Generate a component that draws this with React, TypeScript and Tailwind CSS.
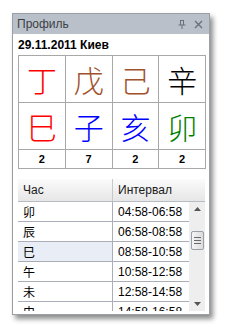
import React from 'react';

const stems = [
  { ch: '丁', color: 'text-[#ff0000]' },
  { ch: '戊', color: 'text-[#a0522d]' },
  { ch: '己', color: 'text-[#a0522d]' },
  { ch: '辛', color: 'text-black' },
];

const branches = [
  { ch: '巳', color: 'text-[#ff0000]' },
  { ch: '子', color: 'text-[#0000ff]' },
  { ch: '亥', color: 'text-[#0000ff]' },
  { ch: '卯', color: 'text-[#008000]' },
];

const counts = ['2', '7', '2', '2'];

const hours = [
  { h: '卯', t: '04:58-06:58' },
  { h: '辰', t: '06:58-08:58' },
  { h: '巳', t: '08:58-10:58', selected: true },
  { h: '午', t: '10:58-12:58' },
  { h: '未', t: '12:58-14:58' },
  { h: '申', t: '14:58-16:58' },
];

const cjk = { fontFamily: '"Noto Sans CJK SC", sans-serif' };

const App: React.FC = () => {
  return (
    <div className="w-[225px] h-[330px] bg-white pl-[12px] pt-[13px] font-['Liberation_Sans',Arial,sans-serif]">
      <div className="w-[198px] h-[302px] border border-[#9a9fa6] bg-white shadow-[3px_4px_5px_rgba(0,0,0,0.45)] flex flex-col overflow-hidden">
        {/* title bar */}
        <div className="h-[20px] bg-[#b9c0c9] flex items-center pl-[4px] pr-[6px] shrink-0">
          <span className="text-[12px] text-[#3c4046] leading-none">Профиль</span>
          <div className="ml-auto flex items-center gap-[8px] text-[#6a7078]">
            <svg width="8" height="9" viewBox="0 0 8 9">
              <path d="M2 0.5h4M2.5 0.5v4.5M5.5 0.5v4.5M0.5 5h7M4 5v4" stroke="currentColor" strokeWidth="1" fill="none" />
            </svg>
            <svg width="9" height="9" viewBox="0 0 9 9">
              <path d="M1 1l7 7M8 1l-7 7" stroke="currentColor" strokeWidth="1.4" fill="none" />
            </svg>
          </div>
        </div>

        <div className="pl-[5px] pr-[3px] flex flex-col">
          <div className="h-[21px] pt-[5px] text-[12px] font-bold text-black leading-none">29.11.2011 Киев</div>

          {/* pillars grid */}
          <div className="grid grid-cols-4 w-[188px] border-l border-t border-[#a8a8a8]">
            {stems.map((s, i) => (
              <div key={'s' + i} className={`h-[47px] border-r border-b border-[#a8a8a8] flex items-center justify-center text-[30px] font-light leading-none ${s.color}`} style={cjk}>
                {s.ch}
              </div>
            ))}
            {branches.map((s, i) => (
              <div key={'b' + i} className={`h-[47px] border-r border-b border-[#a8a8a8] flex items-center justify-center text-[30px] font-light leading-none ${s.color}`} style={cjk}>
                {s.ch}
              </div>
            ))}
            {counts.map((c, i) => (
              <div key={'c' + i} className="h-[19px] border-r border-b border-[#a8a8a8] flex items-center justify-center text-[11px] font-bold text-black">
                {c}
              </div>
            ))}
          </div>

          {/* hours table */}
          <div className="mt-[10px] w-[187px] h-[132px] flex flex-col overflow-hidden">
            <div className="h-[23px] flex shrink-0 bg-gradient-to-b from-[#fbfbfb] to-[#e6e6e6] border-b border-[#b8bcc4]">
              <div className="w-[95px] border-r border-[#c8c8c8] pl-[5px] flex items-center text-[12px] text-[#1a1a1a]">Час</div>
              <div className="flex-1 pl-[5px] flex items-center text-[12px] text-[#1a1a1a]">Интервал</div>
            </div>
            <div className="flex flex-1 min-h-0">
              <div className="w-[171px] flex flex-col">
                {hours.map((r) => (
                  <div key={r.h} className="h-[20px] flex shrink-0 border-b border-[#a9aeb8]">
                    <div className={`w-[95px] border-r border-[#a9aeb8] pl-[5px] flex items-center text-[12px] text-black ${r.selected ? 'bg-[#e8edf6]' : ''}`} style={cjk}>
                      {r.h}
                    </div>
                    <div className="flex-1 pl-[5px] flex items-center text-[12px] text-black">{r.t}</div>
                  </div>
                ))}
              </div>
              {/* scrollbar */}
              <div className="w-[16px] bg-[#eeeeee] flex flex-col items-center">
                <div className="h-[14px] flex items-center justify-center">
                  <svg width="7" height="4" viewBox="0 0 7 4"><path d="M0 4L3.5 0L7 4Z" fill="#555" /></svg>
                </div>
                <div className="mt-[15px] w-[13px] h-[19px] border border-[#9aa0a8] rounded-[2px] bg-gradient-to-r from-[#f4f4f4] to-[#dcdcdc] flex flex-col items-center justify-center gap-[2px]">
                  <div className="w-[7px] h-px bg-[#6a6a6a]" />
                  <div className="w-[7px] h-px bg-[#6a6a6a]" />
                  <div className="w-[7px] h-px bg-[#6a6a6a]" />
                </div>
                <div className="mt-auto h-[14px] flex items-center justify-center">
                  <svg width="7" height="4" viewBox="0 0 7 4"><path d="M0 0L3.5 4L7 0Z" fill="#555" /></svg>
                </div>
              </div>
            </div>
          </div>
        </div>
      </div>
    </div>
  );
};

export default App;
